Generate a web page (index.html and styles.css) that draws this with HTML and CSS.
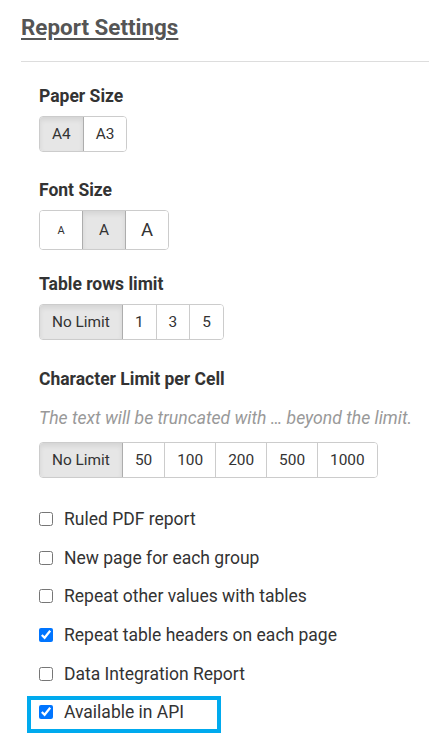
FILE: index.html
```html
<!DOCTYPE html>
<html>
<head>
<meta charset="utf-8">
<link rel="stylesheet" href="styles.css">
</head>
<body>
<div class="page">
  <h1 class="title">Report Settings</h1>
  <hr class="rule">
  <div class="body">
    <div class="field">
      <div class="label">Paper Size</div>
      <div class="group">
        <span class="btn active">A4</span><span class="btn">A3</span>
      </div>
    </div>
    <div class="field field-font">
      <div class="label">Font Size</div>
      <div class="group">
        <span class="btn fs fs-s">A</span><span class="btn fs fs-m active">A</span><span class="btn fs fs-l">A</span>
      </div>
    </div>
    <div class="field field-rows">
      <div class="label">Table rows limit</div>
      <div class="group">
        <span class="btn active">No Limit</span><span class="btn">1</span><span class="btn">3</span><span class="btn">5</span>
      </div>
    </div>
    <div class="field field-last">
      <div class="label">Character Limit per Cell</div>
      <div class="hint">The text will be truncated with … beyond the limit.</div>
      <div class="group">
        <span class="btn active">No Limit</span><span class="btn">50</span><span class="btn">100</span><span class="btn">200</span><span class="btn">500</span><span class="btn">1000</span>
      </div>
    </div>
    <div class="checks">
      <label class="check"><input type="checkbox"><span>Ruled PDF report</span></label>
      <label class="check"><input type="checkbox"><span>New page for each group</span></label>
      <label class="check"><input type="checkbox"><span>Repeat other values with tables</span></label>
      <label class="check"><input type="checkbox" checked><span>Repeat table headers on each page</span></label>
      <label class="check"><input type="checkbox"><span>Data Integration Report</span></label>
      <div class="highlight">
        <label class="check"><input type="checkbox" checked><span>Available in API</span></label>
      </div>
    </div>
  </div>
</div>
</body>
</html>
```
FILE: styles.css
```css
html, body {
  margin: 0;
  padding: 0;
  background: #fff;
}
body {
  font-family: Roboto, "Liberation Sans", sans-serif;
  color: #333;
  overflow: hidden;
}
.page {
  padding: 12px 0 0 21px;
}
.title {
  margin: 0;
  font-size: 22.4px;
  line-height: 30px;
  font-weight: 700;
  color: #555;
  text-decoration: underline;
  text-underline-offset: 3px;
}
.rule {
  margin: 19px 0 0 0;
  border: 0;
  border-top: 1px solid #ddd;
  height: 0;
}
.body {
  padding: 23px 0 0 18px;
}
.field {
  margin-bottom: 27px;
}
.field-font {
  margin-bottom: 23px;
}
.field-rows {
  margin-bottom: 28px;
}
.field-last {
  margin-bottom: 22px;
}
.label {
  font-size: 17.5px;
  font-weight: 700;
  line-height: 22px;
  color: #333;
  margin-bottom: 9px;
}
.hint {
  font-size: 17.6px;
  font-style: italic;
  color: #999;
  line-height: 22px;
  margin: 17px 0 13px;
}
.group {
  display: inline-flex;
  border: 1px solid #ccc;
  border-radius: 4px;
  overflow: hidden;
}
.btn {
  display: flex;
  align-items: center;
  justify-content: center;
  padding: 0 12px;
  height: 34px;
  font-size: 15.4px;
  color: #333;
  background: #fff;
  border-left: 1px solid #ccc;
}
.btn:first-child {
  border-left: 0;
}
.btn.active {
  background: #e6e6e6;
  box-shadow: inset 0 3px 5px rgba(0,0,0,0.08);
  border-right: 1px solid #adadad;
}
.btn.active + .btn {
  border-left: 0;
}
.fs {
  height: 38px;
  width: 18px;
}
.fs-s { font-size: 11px; }
.fs-m { font-size: 15.4px; border-left: 1px solid #adadad; }
.fs-l { font-size: 18.5px; }
.check {
  display: flex;
  align-items: center;
  height: 38.6px;
  font-size: 17.5px;
  color: #333;
}
.check input {
  margin: 0 11px 0 0;
  width: 14px;
  height: 14px;
}
.highlight {
  margin: 3.5px 0 0 -12px;
  width: 178px;
  border: 4px solid #00aaee;
  padding-left: 8px;
  height: 29px;
  display: flex;
  align-items: flex-start;
}
.highlight .check {
  height: 24px;
}
```
